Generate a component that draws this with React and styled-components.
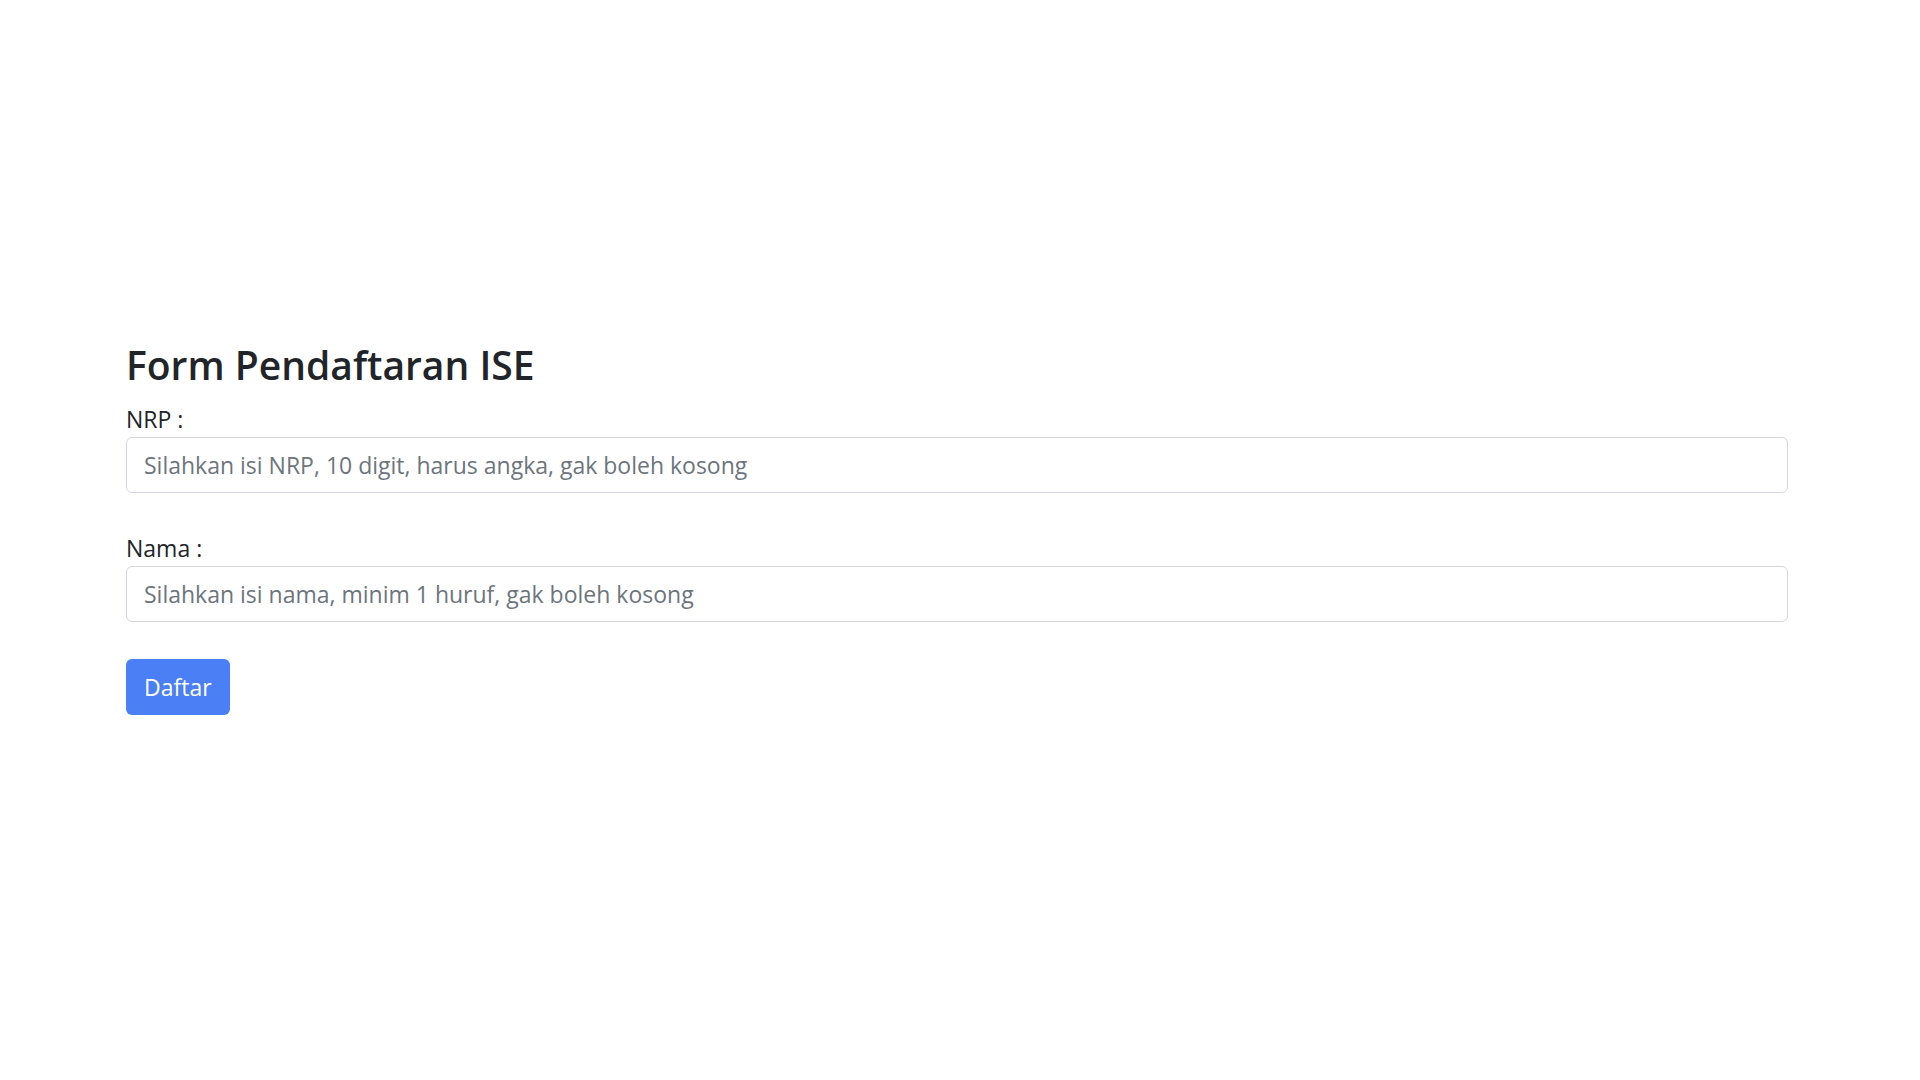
import styled, { createGlobalStyle } from "styled-components";

const GlobalStyle = createGlobalStyle`
    * {
        box-sizing: border-box;
    }
    body {
        margin: 0;
        background: #ffffff;
        font-family: "Open Sans", "Noto Sans", "Liberation Sans", sans-serif;
        color: #212529;
    }
`

const Page = styled.main`
    min-height: 100vh;
    padding: 340px 132px 0 126px;
`

const Title = styled.h2`
    margin: 0 0 10px;
    font-size: 39px;
    font-weight: 600;
    line-height: 1.3;
    color: #212529;
`

const Field = styled.div`
    display: flex;
    flex-direction: column;
    margin-bottom: 37px;
`

const Label = styled.label`
    font-size: 23px;
    line-height: 36px;
    color: #212529;
`

const Input = styled.input`
    width: 100%;
    height: 56px;
    padding: 0 17px;
    font-family: inherit;
    font-size: 23px;
    color: #212529;
    background: #ffffff;
    border: 1px solid #d3d7dc;
    border-radius: 6px;
    outline: none;

    &::placeholder {
        color: #6c757d;
    }
`

const Button = styled.button`
    height: 56px;
    padding: 0 18px;
    font-family: inherit;
    font-size: 23px;
    color: #ffffff;
    background: #4a7ff6;
    border: none;
    border-radius: 6px;
    cursor: pointer;
`

export default function App() {
    return (
        <>
            <GlobalStyle />
            <Page>
                <Title>Form Pendaftaran ISE</Title>
                <Field>
                    <Label htmlFor="nrp">NRP :</Label>
                    <Input id="nrp" placeholder="Silahkan isi NRP, 10 digit, harus angka, gak boleh kosong" />
                </Field>
                <Field>
                    <Label htmlFor="nama">Nama :</Label>
                    <Input id="nama" placeholder="Silahkan isi nama, minim 1 huruf, gak boleh kosong" />
                </Field>
                <Button type="submit">Daftar</Button>
            </Page>
        </>
    )
}
